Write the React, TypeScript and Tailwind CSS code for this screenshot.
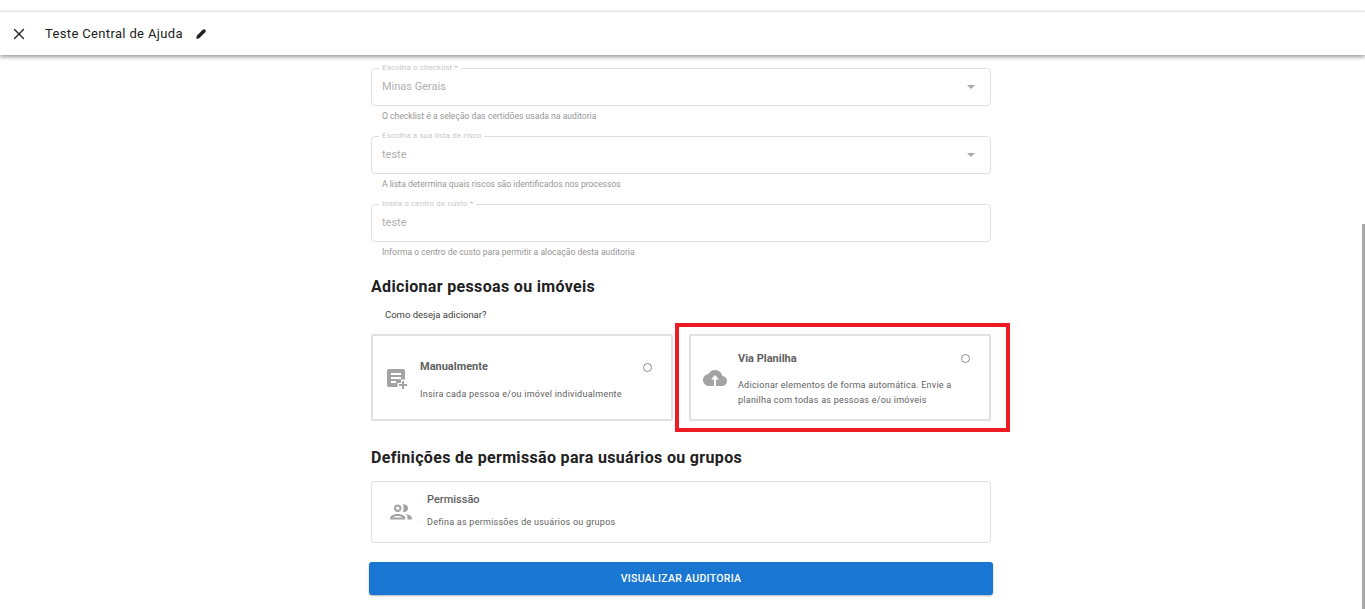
import { Pencil, X } from 'lucide-react';

const font = { fontFamily: 'Roboto, sans-serif' };

const CaretDown = () => (
  <svg width="8" height="4" viewBox="0 0 10 5" className="fill-[#a8a8a8]">
    <path d="M0 0l5 5 5-5z" />
  </svg>
);

const PlaylistIcon = () => (
  <svg width="24" height="24" viewBox="0 0 24 24" className="fill-[#a3a3a3]">
    <path d="M5 3h14a2 2 0 0 1 2 2v8.5h-4V17h-3.5v4H5a2 2 0 0 1-2-2V5a2 2 0 0 1 2-2zm2 4v2h10V7H7zm0 4v2h10v-2H7zm0 4v2h5v-2H7z" />
    <path d="M18 15h2v3h3v2h-3v3h-2v-3h-3v-2h3z" />
  </svg>
);

const CloudUploadIcon = () => (
  <svg width="24" height="24" viewBox="0 0 24 24" className="fill-[#a3a3a3]">
    <path
      fillRule="evenodd"
      d="M19.35 10.04C18.67 6.59 15.64 4 12 4 9.11 4 6.6 5.64 5.35 8.04 2.34 8.36 0 10.91 0 14c0 3.31 2.69 6 6 6h5v-6.500H8l4-4.500 4 4.500h-3V20h6c2.76 0 5-2.240 5-5 0-2.640-2.050-4.780-4.650-4.960z"
    />
  </svg>
);

const PeopleIcon = () => (
  <svg width="26" height="26" viewBox="0 0 24 24" className="fill-[#a3a3a3]">
    <path d="M9 13.75c-2.34 0-7 1.17-7 3.5V19h14v-1.75c0-2.33-4.66-3.5-7-3.5zM4.34 17c.84-.58 2.87-1.25 4.66-1.25s3.82.67 4.66 1.25H4.34zM9 12c1.93 0 3.5-1.57 3.5-3.5S10.93 5 9 5 5.500 6.570 5.500 8.500 7.070 12 9 12zm0-5c.83 0 1.500.67 1.500 1.500S9.830 10 9 10s-1.500-.67-1.500-1.500S8.170 7 9 7zm7.040 6.810c1.160.84 1.960 1.960 1.960 3.440V19h4v-1.750c0-2.020-3.500-3.170-5.960-3.440zM15 12c1.930 0 3.500-1.570 3.500-3.500S16.930 5 15 5c-.54 0-1.040.13-1.500.35.630.89 1 1.980 1 3.150s-.37 2.260-1 3.150c.46.220.96.350 1.500.350z" />
  </svg>
);

const Field = ({ label, value, help, select }: { label: string; value: string; help: string; select?: boolean }) => (
  <div className="flex flex-col">
    <div className="relative h-[38px] rounded-[4px] border border-[#e0e0e0] flex items-center justify-between pl-[10px] pr-[15px]">
      <span className="absolute left-[7px] top-[-6px] bg-white px-[3px] text-[8px] leading-[10px] tracking-[0.1px] text-[#c8c8c8]">{label}</span>
      <span className="text-[11px] text-[#b0b0b0]">{value}</span>
      {select && <CaretDown />}
    </div>
    <p className="mt-[5px] pl-[11px] h-[25px] text-[8.6px] leading-[11px] text-[#969696]">{help}</p>
  </div>
);

const Radio = () => <span className="block w-[9px] h-[9px] rounded-full border border-[#8c8c8c]" />;

const App = () => {
  return (
    <div style={font} className="relative h-[609px] w-full overflow-hidden bg-white">
      <div className="h-[11px]" />
      <header className="relative z-10 h-[44px] border-t border-[#e2e2e2] bg-white shadow-[0_2px_4px_rgba(0,0,0,0.4)] flex items-center pl-[10px]">
        <X size={18} strokeWidth={1.8} className="text-[#222]" />
        <span className="ml-[17px] text-[13px] tracking-[0.35px] text-[#212121]">Teste Central de Ajuda</span>
        <Pencil size={10} strokeWidth={2.6} fill="#212121" className="ml-[13px] text-[#212121]" />
      </header>

      <main className="w-[620px] ml-[371px] pt-[13px] flex flex-col">
        <Field label="Escolha o checklist *" value="Minas Gerais" help="O checklist é a seleção das certidões usada na auditoria" select />
        <Field label="Escolha a sua lista de risco" value="teste" help="A lista determina quais riscos são identificados nos processos" select />
        <Field label="Insira o centro de custo *" value="teste" help="Informa o centro de custo para permitir a alocação desta auditoria" />

        <h2 className="mt-[5px] text-[16px] leading-[19px] font-bold tracking-[0.33px] text-[#212121]">Adicionar pessoas ou imóveis</h2>
        <p className="mt-[13px] ml-[14px] text-[9.5px] leading-[12px] text-[#424242]">Como deseja adicionar?</p>

        <div className="mt-[13px] flex gap-[16px]">
          <div className="w-[302px] h-[87px] rounded-[2px] border-2 border-[#e0e0e0] flex items-center pl-[11px] pr-[19px]">
            <PlaylistIcon />
            <div className="ml-[12px] flex-1 h-full flex flex-col">
              <span className="mt-[24px] text-[11px] leading-[14px] font-bold text-[#616161]">Manualmente</span>
              <span className="mt-[13px] text-[9px] leading-[14px] tracking-[0.25px] text-[#616161]">Insira cada pessoa e/ou imóvel individualmente</span>
            </div>
            <div className="self-start mt-[27px]"><Radio /></div>
          </div>

          <div className="relative w-[302px] h-[87px] rounded-[2px] border-2 border-[#e0e0e0] flex items-center pl-[12px] pr-[19px]">
            <CloudUploadIcon />
            <div className="ml-[11px] flex-1 h-full flex flex-col">
              <span className="mt-[16px] text-[11px] leading-[14px] font-bold text-[#616161]">Via Planilha</span>
              <span className="mt-[12px] text-[9px] leading-[15px] tracking-[0.25px] text-[#616161]">Adicionar elementos de forma automática. Envie a planilha com todas as pessoas e/ou imóveis</span>
            </div>
            <div className="self-start mt-[18px]"><Radio /></div>
            <div className="absolute left-[-16px] top-[-13px] w-[335px] h-[109px] border-4 border-[#ed1c24]" />
          </div>
        </div>

        <h2 className="mt-[27px] text-[16px] leading-[19px] font-bold tracking-[0.33px] text-[#212121]">Definições de permissão para usuários ou grupos</h2>

        <div className="mt-[14px] h-[62px] rounded-[3px] border border-[#e0e0e0] flex items-center pl-[16px]">
          <PeopleIcon />
          <div className="ml-[13px] h-full flex flex-col">
            <span className="mt-[11px] text-[11px] leading-[14px] font-medium text-[#616161]">Permissão</span>
            <span className="mt-[8px] text-[9px] leading-[14px] tracking-[0.25px] text-[#616161]">Defina as permissões de usuários ou grupos</span>
          </div>
        </div>

        <button className="mt-[19px] ml-[-2px] w-[624px] h-[33px] rounded-[3px] bg-[#1976d2] text-white text-[10.5px] font-medium tracking-[0.3px] shadow-[0_1px_2px_rgba(0,0,0,0.3)]">
          VISUALIZAR AUDITORIA
        </button>
      </main>

      <div className="absolute right-0 top-[224px] bottom-0 w-[3px] bg-[#a8a8a8]" />
    </div>
  );
};

export default App;
